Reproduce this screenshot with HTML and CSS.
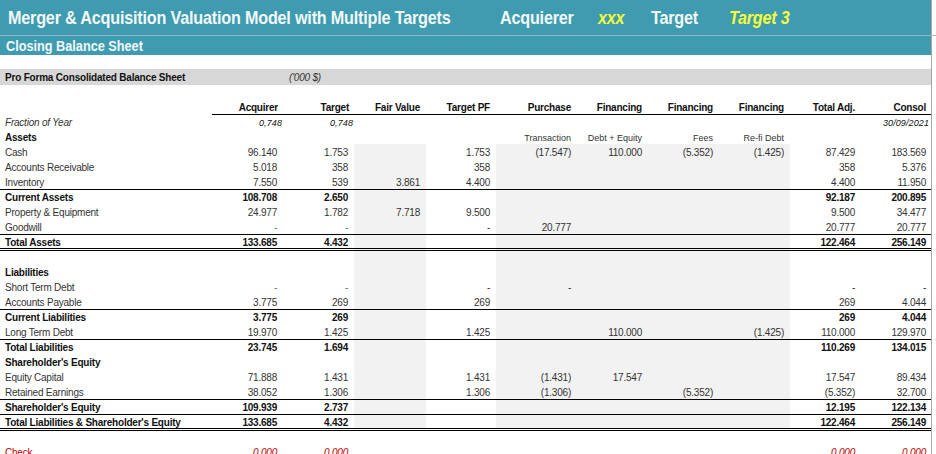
FILE: index.html
```html
<!DOCTYPE html>
<html lang="en">
<head>
<meta charset="utf-8">
<title>Closing Balance Sheet</title>
<link rel="stylesheet" href="styles.css">
</head>
<body>
<div class="sheet">
  <header class="banner">
    <div class="title-row">
      <div class="title-inner">
        <h1 class="title">Merger &amp; Acquisition Valuation Model with Multiple Targets</h1>
        <span class="meta meta-acq">Acquierer</span>
        <span class="meta meta-val meta-xxx">xxx</span>
        <span class="meta meta-tgt">Target</span>
        <span class="meta meta-val">Target 3</span>
      </div>
    </div>
    <div class="sub-row"><span class="sub-text">Closing Balance Sheet</span></div>
  </header>
  <div class="section-band">
    <span class="section-title">Pro Forma Consolidated Balance Sheet</span>
    <span class="section-unit">('000 $)</span>
  </div>
  <table class="bs">
    <colgroup>
      <col class="c-label"><col class="c"><col class="c"><col class="c-fv"><col class="c-pf"><col class="c-wide"><col class="c"><col class="c"><col class="c"><col class="c"><col class="c-last">
    </colgroup>
    <thead>
      <tr class="head"><th></th><th>Acquirer</th><th>Target</th><th>Fair Value</th><th>Target PF</th><th>Purchase</th><th>Financing</th><th>Financing</th><th>Financing</th><th>Total Adj.</th><th>Consol</th></tr>
    </thead>
    <tbody>
      <tr class="ital"><td>Fraction of Year</td><td><i class="tiny">0,748</i></td><td><i class="tiny">0,748</i></td><td></td><td></td><td></td><td></td><td></td><td></td><td></td><td><i class="tiny">30/09/2021</i></td></tr>
      <tr class="note"><td class="b">Assets</td><td></td><td></td><td></td><td></td><td>Transaction</td><td>Debt + Equity</td><td>Fees</td><td>Re-fi Debt</td><td></td><td></td></tr>
      <tr class="sh"><td>Cash</td><td>96.140</td><td>1.753</td><td></td><td>1.753</td><td>(17.547)</td><td>110.000</td><td>(5.352)</td><td>(1.425)</td><td>87.429</td><td>183.569</td></tr>
      <tr class="sh"><td>Accounts Receivable</td><td>5.018</td><td>358</td><td></td><td>358</td><td></td><td></td><td></td><td></td><td>358</td><td>5.376</td></tr>
      <tr class="sh"><td>Inventory</td><td>7.550</td><td>539</td><td>3.861</td><td>4.400</td><td></td><td></td><td></td><td></td><td>4.400</td><td>11.950</td></tr>
      <tr class="sh tot"><td>Current Assets</td><td>108.708</td><td>2.650</td><td></td><td></td><td></td><td></td><td></td><td></td><td>92.187</td><td>200.895</td></tr>
      <tr class="sh"><td>Property &amp; Equipment</td><td>24.977</td><td>1.782</td><td>7.718</td><td>9.500</td><td></td><td></td><td></td><td></td><td>9.500</td><td>34.477</td></tr>
      <tr class="sh"><td>Goodwill</td><td class="dash">-</td><td class="dash">-</td><td></td><td>-</td><td>20.777</td><td></td><td></td><td></td><td>20.777</td><td>20.777</td></tr>
      <tr class="sh tot short"><td>Total Assets</td><td>133.685</td><td>4.432</td><td></td><td></td><td></td><td></td><td></td><td></td><td>122.464</td><td>256.149</td></tr>
      <tr class="sh gap"><td></td><td></td><td></td><td></td><td></td><td></td><td></td><td></td><td></td><td></td><td></td></tr>
      <tr class="sh"><td class="b">Liabilities</td><td></td><td></td><td></td><td></td><td></td><td></td><td></td><td></td><td></td><td></td></tr>
      <tr class="sh"><td>Short Term Debt</td><td class="dash">-</td><td class="dash">-</td><td></td><td>-</td><td>-</td><td></td><td></td><td></td><td>-</td><td>-</td></tr>
      <tr class="sh"><td>Accounts Payable</td><td>3.775</td><td>269</td><td></td><td>269</td><td></td><td></td><td></td><td></td><td>269</td><td>4.044</td></tr>
      <tr class="sh tot"><td>Current Liabilities</td><td>3.775</td><td>269</td><td></td><td></td><td></td><td></td><td></td><td></td><td>269</td><td>4.044</td></tr>
      <tr class="sh"><td>Long Term Debt</td><td>19.970</td><td>1.425</td><td></td><td>1.425</td><td></td><td>110.000</td><td></td><td>(1.425)</td><td>110.000</td><td>129.970</td></tr>
      <tr class="sh tot"><td>Total Liabilities</td><td>23.745</td><td>1.694</td><td></td><td></td><td></td><td></td><td></td><td></td><td>110.269</td><td>134.015</td></tr>
      <tr class="sh"><td class="b">Shareholder's Equity</td><td></td><td></td><td></td><td></td><td></td><td></td><td></td><td></td><td></td><td></td></tr>
      <tr class="sh"><td>Equity Capital</td><td>71.888</td><td>1.431</td><td></td><td>1.431</td><td>(1.431)</td><td>17.547</td><td></td><td></td><td>17.547</td><td>89.434</td></tr>
      <tr class="sh"><td>Retained Earnings</td><td>38.052</td><td>1.306</td><td></td><td>1.306</td><td>(1.306)</td><td></td><td>(5.352)</td><td></td><td>(5.352)</td><td>32.700</td></tr>
      <tr class="sh tot"><td>Shareholder's Equity</td><td>109.939</td><td>2.737</td><td></td><td></td><td></td><td></td><td></td><td></td><td>12.195</td><td>122.134</td></tr>
      <tr class="sh tot short"><td>Total Liabilities &amp; Shareholder's Equity</td><td>133.685</td><td>4.432</td><td></td><td></td><td></td><td></td><td></td><td></td><td>122.464</td><td>256.149</td></tr>
      <tr class="gap"><td></td><td></td><td></td><td></td><td></td><td></td><td></td><td></td><td></td><td></td><td></td></tr>
      <tr class="check"><td>Check</td><td>0.000</td><td>0.000</td><td></td><td></td><td></td><td></td><td></td><td></td><td>0.000</td><td>0.000</td></tr>
    </tbody>
  </table>
</div>
</body>
</html>
```
FILE: styles.css
```css
html, body { margin: 0; padding: 0; background: #fff; height: 454px; overflow: hidden; }
body { font-family: "Liberation Sans", Arial, sans-serif; color: #333; }
.sheet { width: 932px; height: 454px; border-right: 1px solid #a6a6a6; box-sizing: border-box; }
.banner { background: #3f9bb0; color: #f2f8f8; height: 55px; }
.title-row { position: relative; height: 35px; border-bottom: 1px solid #8fb9c4; padding-left: 8px; }
.title-row::after { content: ""; position: absolute; left: 100%; bottom: -1px; width: 6px; height: 1px; background: #b5b5b5; }
.title-inner { display: flex; align-items: center; height: 36px; width: 1000px; transform: scaleX(0.875); transform-origin: left center; }
.title { margin: 0; font-size: 18.5px; font-weight: bold; width: 562.3px; letter-spacing: -0.23px; white-space: nowrap; }
.meta { font-size: 18.5px; font-weight: bold; letter-spacing: -0.25px; white-space: nowrap; }
.meta-acq { width: 112px; }
.meta-xxx { width: 60.6px; }
.meta-tgt { width: 89px; }
.meta-val { color: #f4fb3c; font-style: italic; }
.sub-row { height: 19px; line-height: 20px; padding-left: 6px; font-size: 14px; font-weight: bold; }
.sub-text { display: inline-block; transform: scaleX(0.907); transform-origin: left center; }
.section-band { margin-top: 14px; height: 16px; background: #d7d7d7; display: flex; align-items: center; padding-left: 5px; font-size: 10px; letter-spacing: -0.2px; }
.section-title { width: 284px; font-weight: bold; color: #111; }
.section-unit { font-style: italic; }
.bs { border-collapse: separate; border-spacing: 0; table-layout: fixed; width: 931px; margin-top: 14px; font-size: 10px; letter-spacing: -0.22px; }
.c-label { width: 212px; }
.c { width: 71px; }
.c-fv { width: 72px; }
.c-pf { width: 70px; }
.c-wide { width: 81px; }
.c-last { width: 70px; }
.bs th, .bs td { height: 15px; padding: 3px 6px 0 0; text-align: right; white-space: nowrap; line-height: 12px; box-sizing: border-box; }
.bs td:first-child { text-align: left; padding-left: 5px; }
.bs th:last-child, .bs td:last-child { padding-right: 5px; }
.head th { color: #111; font-weight: bold; padding: 2px 6px 0 0; line-height: 13px; }
.head th:nth-child(2), .head th:nth-child(3) { padding-right: 5px; }
.ital td:not(:first-child) { border-top: 1px solid #000; padding-top: 2px; padding-right: 1px; }
.ital td:first-child { font-style: italic; }
.ital td:last-child { padding-right: 2px; }
.tiny { font-size: 9px; color: #111; letter-spacing: 0.1px; }
.note td:not(:first-child) { font-size: 9px; letter-spacing: 0; }
.b { font-weight: bold; color: #111; }
.sh td:nth-child(4), .sh td:nth-child(n+6):nth-child(-n+9) { background: #f2f2f2; }
.tot td { font-weight: bold; color: #111; border-top: 1px solid #000; padding-top: 2px; }
.short td { height: 14px; padding-top: 3px; line-height: 10px; }
.gap td { height: 16px; border-top: 3px double #000; padding: 0; }
.dash { color: #2f8a5a; }
.check td { color: #c00000; }
.check td:not(:first-child) { font-style: italic; }
```
